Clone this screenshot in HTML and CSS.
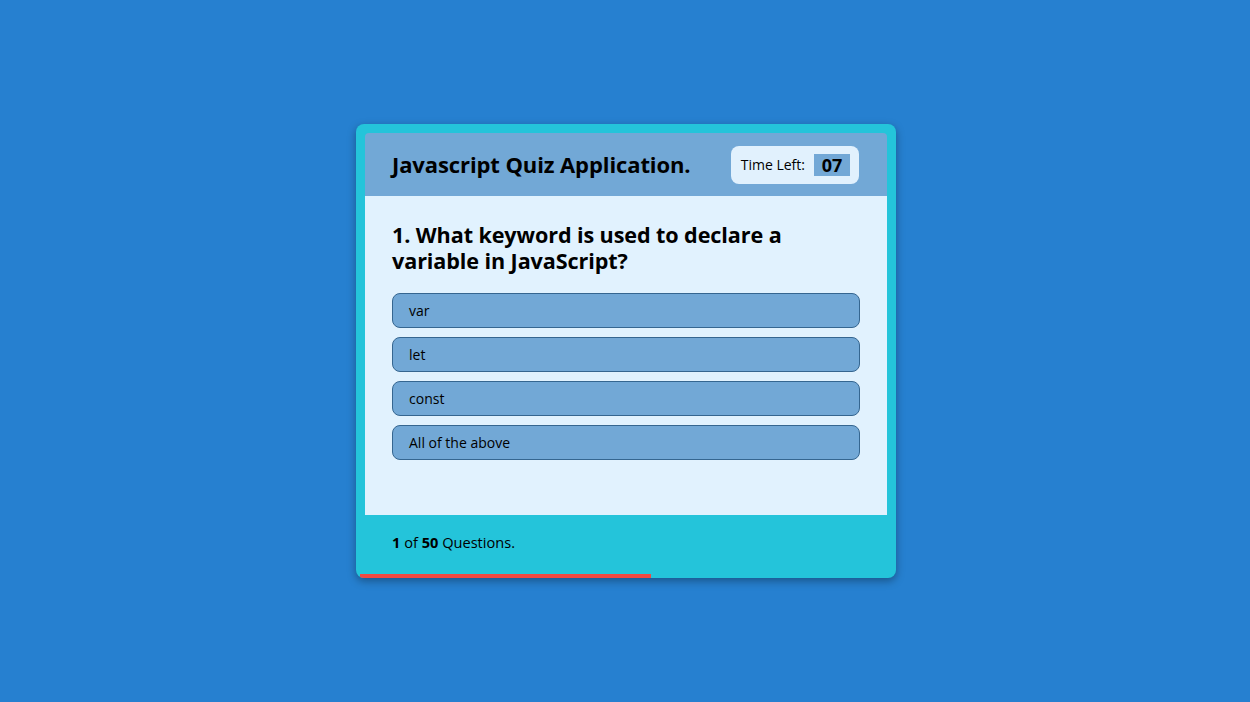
FILE: index.html
```html
<!DOCTYPE html>
<html>
<head>
<meta charset="utf-8">
<link rel="stylesheet" href="styles.css">
</head>
<body>
<div class="quiz">
  <div class="quiz-header">
    <h1 class="title">Javascript Quiz Application.</h1>
    <div class="timer">
      <span class="timer-label">Time Left:</span>
      <span class="timer-value">07</span>
    </div>
  </div>
  <div class="quiz-body">
    <h2 class="question">1. What keyword is used to declare a variable in JavaScript?</h2>
    <ul class="options">
      <li class="option">var</li>
      <li class="option">let</li>
      <li class="option">const</li>
      <li class="option">All of the above</li>
    </ul>
  </div>
  <div class="quiz-footer">
    <p class="count"><b>1</b> of <b>50</b> Questions.</p>
  </div>
  <div class="progress" style="width: 291px"></div>
</div>
</body>
</html>
```
FILE: styles.css
```css
* { box-sizing: border-box; }
html, body { margin: 0; padding: 0; }
body {
  height: 100vh;
  padding-left: 2px;
  background: #2680d0;
  font-family: "Open Sans", "Noto Sans", sans-serif;
  color: #000;
  display: flex;
  align-items: center;
  justify-content: center;
}
.quiz {
  width: 540px;
  background: #24c4da;
  border-radius: 8px;
  padding-top: 9px;
  box-shadow: 0 3px 8px rgba(0, 0, 0, 0.35);
  display: flex;
  flex-direction: column;
  overflow: hidden;
}
.quiz-header {
  margin: 0 9px;
  height: 63px;
  background: #72a8d6;
  border-radius: 4px 4px 0 0;
  padding: 0 28px 0 27px;
  display: flex;
  align-items: center;
  justify-content: space-between;
}
.title {
  margin: 0;
  font-size: 22px;
  line-height: 28px;
  font-weight: 700;
  letter-spacing: -0.1px;
  position: relative;
  top: -1px;
}
.timer {
  height: 38px;
  background: #e1f1fd;
  border-radius: 8px;
  padding: 0 9px 0 10px;
  display: flex;
  align-items: center;
  gap: 9px;
  font-size: 14px;
}
.timer-value {
  width: 36px;
  height: 22px;
  background: #72a8d6;
  font-size: 18px;
  font-weight: 700;
  display: flex;
  align-items: center;
  justify-content: center;
}
.quiz-body {
  margin: 0 9px;
  height: 319px;
  background: #e1f2fe;
  padding: 26px 27px 0 27px;
}
.question {
  margin: 0;
  font-size: 21.6px;
  line-height: 26px;
  font-weight: 700;
  letter-spacing: -0.1px;
}
.options {
  list-style: none;
  margin: 19px 0 0 0;
  padding: 0;
  display: flex;
  flex-direction: column;
  gap: 9px;
}
.option {
  height: 35px;
  background: #72a8d6;
  border: 1px solid #356690;
  border-radius: 8px;
  padding: 0 16px;
  display: flex;
  align-items: center;
  font-size: 14px;
}
.quiz-footer {
  height: 59px;
  padding: 0 36px 5px 36px;
  display: flex;
  align-items: center;
}
.count {
  margin: 0;
  font-size: 14.6px;
}
.progress {
  height: 4px;
  margin-left: 4px;
  background: #f24841;
}
```
